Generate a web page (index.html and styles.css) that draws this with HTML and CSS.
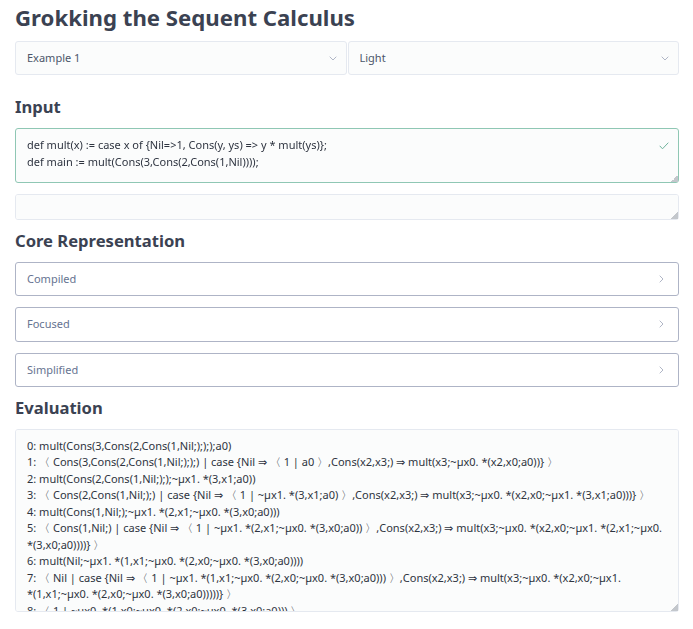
FILE: index.html
```html
<!DOCTYPE html>
<html lang="en">
  <head>
    <meta charset="UTF-8" />
    <meta name="viewport" content="width=device-width, initial-scale=1.0" />
    <title>Grokking the Sequent Calculus</title>
    <link rel="stylesheet" href="styles.css">
  </head>

  <body>
    <h1>Grokking the Sequent Calculus</h1>
    <div class="selects">
      <div class="select-wrap">
        <select class="select">
          <option>Example 1</option>
          <option>Example 2</option>
        </select>
        <svg class="select-arrow" width="8" height="5" viewBox="0 0 8 5"><path d="M.7.7 4 4 7.300.7" /></svg>
      </div>
      <div class="select-wrap">
        <select class="select">
          <option>Light</option>
          <option>Dark</option>
        </select>
        <svg class="select-arrow" width="8" height="5" viewBox="0 0 8 5"><path d="M.7.7 4 4 7.300.7" /></svg>
      </div>
    </div>

    <h2 class="input-title">Input</h2>
    <div class="input-wrap">
      <textarea class="area valid" spellcheck="false">def mult(x) := case x of {Nil=&gt;1, Cons(y, ys) =&gt; y * mult(ys)};
def main := mult(Cons(3,Cons(2,Cons(1,Nil))));</textarea>
      <svg class="check" width="10" height="8" viewBox="0 0 10 8"><path d="M.7 3.800 3.500 6.800 9.300.7" /></svg>
    </div>
    <textarea class="area errors" spellcheck="false"></textarea>

    <h2 class="core-title">Core Representation</h2>
    <div class="panels">
      <div class="panel">
        <span>Compiled</span>
        <svg width="5" height="8" viewBox="0 0 5 8"><path d="M.7.7 4 4 .7 7.300" /></svg>
      </div>
      <div class="panel">
        <span>Focused</span>
        <svg width="5" height="8" viewBox="0 0 5 8"><path d="M.7.7 4 4 .7 7.300" /></svg>
      </div>
      <div class="panel">
        <span>Simplified</span>
        <svg width="5" height="8" viewBox="0 0 5 8"><path d="M.7.7 4 4 .7 7.300" /></svg>
      </div>
    </div>

    <h2 class="eval-title">Evaluation</h2>
    <textarea class="area trace" readonly spellcheck="false">0: mult(Cons(3,Cons(2,Cons(1,Nil;);););a0)
1: 〈 Cons(3,Cons(2,Cons(1,Nil;););) | case {Nil ⇒ 〈 1 | a0 〉,Cons(x2,x3;) ⇒ mult(x3;~µx0. *(x2,x0;a0))} 〉
2: mult(Cons(2,Cons(1,Nil;););~µx1. *(3,x1;a0))
3: 〈 Cons(2,Cons(1,Nil;);) | case {Nil ⇒ 〈 1 | ~µx1. *(3,x1;a0) 〉,Cons(x2,x3;) ⇒ mult(x3;~µx0. *(x2,x0;~µx1. *(3,x1;a0)))} 〉
4: mult(Cons(1,Nil;);~µx1. *(2,x1;~µx0. *(3,x0;a0)))
5: 〈 Cons(1,Nil;) | case {Nil ⇒ 〈 1 | ~µx1. *(2,x1;~µx0. *(3,x0;a0)) 〉,Cons(x2,x3;) ⇒ mult(x3;~µx0. *(x2,x0;~µx1. *(2,x1;~µx0. *(3,x0;a0))))} 〉
6: mult(Nil;~µx1. *(1,x1;~µx0. *(2,x0;~µx0. *(3,x0;a0))))
7: 〈 Nil | case {Nil ⇒ 〈 1 | ~µx1. *(1,x1;~µx0. *(2,x0;~µx0. *(3,x0;a0))) 〉,Cons(x2,x3;) ⇒ mult(x3;~µx0. *(x2,x0;~µx1.
*(1,x1;~µx0. *(2,x0;~µx0. *(3,x0;a0)))))} 〉
8: 〈 1 | ~µx0. *(1,x0;~µx0. *(2,x0;~µx0. *(3,x0;a0))) 〉
9: *(1,1;~µx0. *(2,x0;~µx0. *(3,x0;a0)))</textarea>
  </body>
</html>
```

FILE: styles.css
```css
* {
  box-sizing: border-box;
}

body {
  margin: 0;
  padding: 5px 14px 0 15px;
  font-family: "Noto Sans", sans-serif;
  font-size: 11px;
  line-height: 1.5;
  color: #2e3440;
  background: #fff;
}

h1,
h2 {
  margin: 0;
  color: #3b4252;
  font-weight: 700;
}

h1 {
  font-size: 22.2px;
  line-height: 26px;
  margin-bottom: 10px;
}

h2 {
  font-size: 16.6px;
  line-height: 22px;
}

.selects {
  display: flex;
  gap: 1px;
}

.select-wrap {
  position: relative;
  flex: 1;
}

.select {
  display: block;
  width: 100%;
  height: 34px;
  padding: 0 11px;
  appearance: none;
  font: inherit;
  color: #4c566a;
  background: #fbfcfc;
  border: 1px solid #e5e9f0;
  border-radius: 3px;
  outline: none;
}

.select-arrow {
  position: absolute;
  top: 15px;
  right: 10px;
}

svg {
  flex: none;
}

svg path {
  fill: none;
  stroke: #b0b6c6;
  stroke-width: 1;
}

.input-title {
  margin-top: 21px;
  margin-bottom: 10px;
}

.input-wrap {
  position: relative;
  margin-bottom: 11px;
}

.area {
  display: block;
  width: 100%;
  padding: 8px 11px;
  font: inherit;
  color: #2e3440;
  background: #fbfcfc;
  border: 1px solid #e5e9f0;
  border-radius: 3px;
  outline: none;
}

.area::-webkit-resizer {
  background: linear-gradient(135deg, transparent 50%, #c3c7cc 50%) no-repeat right bottom / 7px 7px;
}

.valid {
  height: 55px;
  border-color: #8fc7b4;
}

.check {
  position: absolute;
  top: 14px;
  right: 10px;
}

.check path {
  stroke: #6fb39c;
}

.errors {
  height: 25.500px;
}

.core-title {
  margin-top: 10px;
  margin-bottom: 10px;
}

.panels {
  display: flex;
  flex-direction: column;
  gap: 11px;
  margin-bottom: 10px;
}

.panel {
  display: flex;
  align-items: center;
  justify-content: space-between;
  height: 34.500px;
  padding: 0 14px 0 11px;
  color: #667391;
  background: #fff;
  border: 1px solid #aeb4c6;
  border-radius: 3px;
}

.eval-title {
  margin-bottom: 9.500px;
}

.trace {
  height: 183px;
}
```
